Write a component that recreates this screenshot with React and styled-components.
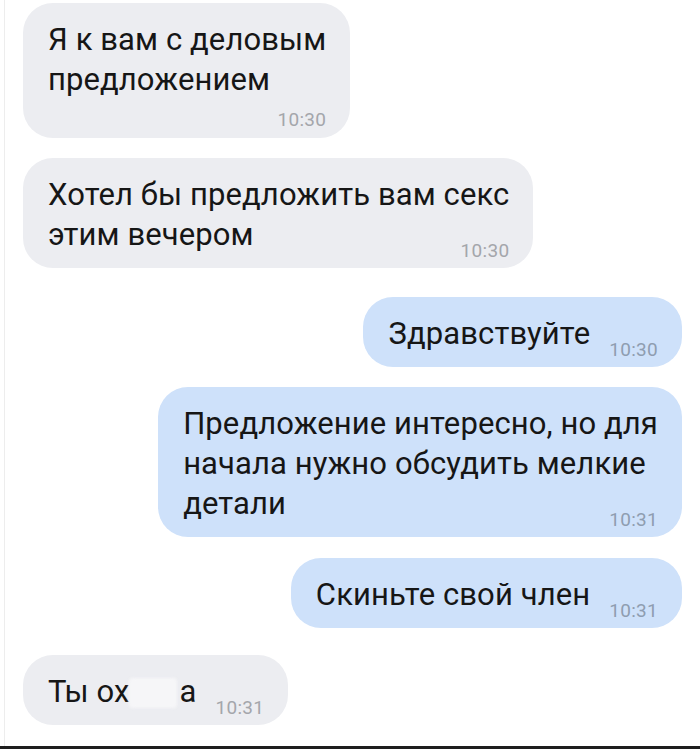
import React from "react";
import styled, { createGlobalStyle } from "styled-components";

const Global = createGlobalStyle`
  html, body { margin: 0; padding: 0; background: #ffffff; }
  body { font-family: Roboto, "Noto Sans", "Liberation Sans", sans-serif; }
`;

const Screen = styled.div`
  width: 700px;
  height: 749px;
  display: flex;
  flex-direction: column;
  background: #ffffff;
  overflow: hidden;
`;

const Chat = styled.div`
  flex: 1;
  margin-left: 4px;
  border-left: 1px solid #ededed;
  padding: 3px 18px 0 18px;
  display: flex;
  flex-direction: column;
`;

const BottomBar = styled.div`
  height: 3px;
  background: #1e1e1e;
`;

const Row = styled.div`
  display: flex;
  justify-content: ${(p) => (p.$out ? "flex-end" : "flex-start")};
  margin-top: ${(p) => p.$gap || 0}px;
`;

const Bubble = styled.div`
  background: ${(p) => (p.$out ? "#cee1fa" : "#ecedf1")};
  border-radius: 30px;
  padding: 17px 24px ${(p) => (p.$below ? 7 : 13)}px 25px;
  display: flex;
  flex-direction: column;
  color: #161616;
  font-size: 31px;
  letter-spacing: 0.1px;
  line-height: 40px;
  white-space: nowrap;
`;

const Line = styled.div`
  display: flex;
  justify-content: space-between;
  align-items: flex-end;
`;

const Time = styled.span`
  font-size: 19px;
  line-height: 8px;
  margin-left: 19px;
  color: ${(p) => (p.$out ? "#8f9db0" : "#a4a6ab")};
  letter-spacing: 0.3px;
`;

const TimeRow = styled.div`
  display: flex;
  justify-content: flex-end;
  margin-top: 9px;
  font-size: 19px;
  line-height: 22px;
  color: #a4a6ab;
  letter-spacing: 0.3px;
`;

const Censor = styled.span`
  display: inline-block;
  width: 48px;
  height: 30px;
  margin: 0 3px 0 -1px;
  vertical-align: -6px;
  background: #f6f6f8;
  border-radius: 4px;
  filter: blur(1.5px);
`;

export default function App() {
  return (
    <Screen>
      <Global />
      <Chat>
        <Row>
          <Bubble $below>
            <Line>Я к вам с деловым</Line>
            <Line>предложением</Line>
            <TimeRow>10:30</TimeRow>
          </Bubble>
        </Row>
        <Row $gap={20}>
          <Bubble>
            <Line>Хотел бы предложить вам секс</Line>
            <Line>
              <span>этим вечером</span>
              <Time>10:30</Time>
            </Line>
          </Bubble>
        </Row>
        <Row $out $gap={29}>
          <Bubble $out>
            <Line>
              <span>Здравствуйте</span>
              <Time $out>10:30</Time>
            </Line>
          </Bubble>
        </Row>
        <Row $out $gap={20}>
          <Bubble $out>
            <Line>Предложение интересно, но для</Line>
            <Line>начала нужно обсудить мелкие</Line>
            <Line>
              <span>детали</span>
              <Time $out>10:31</Time>
            </Line>
          </Bubble>
        </Row>
        <Row $out $gap={21}>
          <Bubble $out>
            <Line>
              <span>Скиньте свой член</span>
              <Time $out>10:31</Time>
            </Line>
          </Bubble>
        </Row>
        <Row $gap={27}>
          <Bubble>
            <Line>
              <span>
                Ты ох<Censor />а
              </span>
              <Time>10:31</Time>
            </Line>
          </Bubble>
        </Row>
      </Chat>
      <BottomBar />
    </Screen>
  );
}
